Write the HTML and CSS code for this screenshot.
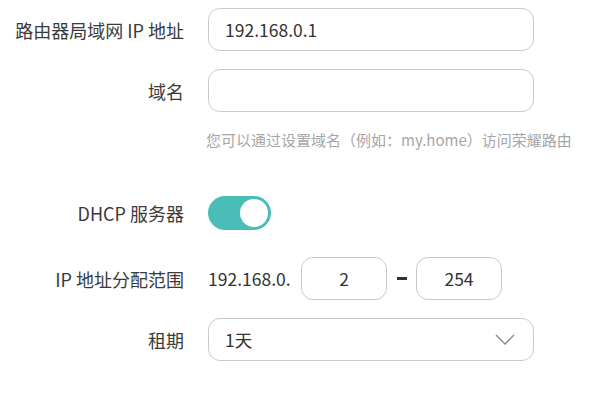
FILE: index.html
```html
<!DOCTYPE html>
<html lang="zh-CN">
<head>
    <meta charset="UTF-8">
    <meta name="viewport" content="width=device-width, initial-scale=1.0">
    <title>局域网设置</title>
    <link rel="stylesheet" href="styles.css">
</head>
<body>

<div class="form">
    <div class="row">
        <label class="row-label" for="lanIp">路由器局域网 IP 地址</label>
        <div class="field">
            <input type="text" id="lanIp" class="text-input" value="192.168.0.1">
        </div>
    </div>

    <div class="row">
        <label class="row-label" for="domain">域名</label>
        <div class="field">
            <input type="text" id="domain" class="text-input" value="">
        </div>
    </div>
    <div class="hint">您可以通过设置域名（例如：my.home）访问荣耀路由</div>

    <div class="row row-switch">
        <span class="row-label">DHCP 服务器</span>
        <div class="field">
            <span class="switch on"><span class="knob"></span></span>
        </div>
    </div>

    <div class="row row-range">
        <span class="row-label">IP 地址分配范围</span>
        <div class="field range">
            <span class="prefix">192.168.0.</span>
            <input type="text" class="text-input small" value="2">
            <span class="dash"></span>
            <input type="text" class="text-input small" value="254">
        </div>
    </div>

    <div class="row">
        <span class="row-label">租期</span>
        <div class="field">
            <div class="select">
                <span>1天</span>
                <svg class="chevron" width="20" height="11" viewBox="0 0 20 11">
                    <polyline points="1,1 10,10 19,1" fill="none" stroke="#8a8a8a" stroke-width="1.4"/>
                </svg>
            </div>
        </div>
    </div>
</div>

</body>
</html>
```

FILE: styles.css
```css
body {
    margin: 0;
    padding: 0;
    background-color: #ffffff;
    font-family: "Noto Sans CJK SC", "Noto Sans", sans-serif;
    color: #333333;
}
.form {
    padding-top: 8px;
}
.row {
    display: flex;
    align-items: center;
    margin-bottom: 18px;
}
.row-label {
    width: 184px;
    flex: none;
    text-align: right;
    font-size: 18px;
    color: #3a3a3a;
    padding-right: 24px;
    box-sizing: content-box;
    white-space: nowrap;
}
.field {
    display: flex;
    align-items: center;
}
.text-input {
    width: 326px;
    height: 43px;
    padding: 0 16px;
    border: 1px solid #c9c9c9;
    border-radius: 12px;
    font-family: inherit;
    font-size: 17.5px;
    color: #333333;
    box-sizing: border-box;
    outline: none;
    background: #ffffff;
}
.hint {
    margin: 0 0 0 206px;
    font-size: 15px;
    color: #a6a6a6;
    line-height: 20px;
}
.row-switch {
    margin-top: 46px;
    margin-bottom: 27px;
}
.switch {
    display: block;
    width: 63px;
    height: 34px;
    border-radius: 17px;
    background-color: #cccccc;
    position: relative;
}
.switch.on {
    background-color: #4bbdb7;
}
.knob {
    position: absolute;
    top: 3px;
    right: 3px;
    width: 28px;
    height: 28px;
    border-radius: 50%;
    background-color: #ffffff;
}
.prefix {
    font-size: 17.5px;
    margin-right: 10px;
    width: 83px;
    white-space: nowrap;
}
.text-input.small {
    width: 86px;
    text-align: center;
    padding: 0 6px;
}
.dash {
    display: block;
    width: 10px;
    height: 3px;
    background-color: #333333;
    margin: 0 9px 0 10px;
}
.select {
    width: 326px;
    height: 43px;
    padding: 0 18px 0 16px;
    border: 1px solid #c9c9c9;
    border-radius: 12px;
    box-sizing: border-box;
    display: flex;
    align-items: center;
    justify-content: space-between;
    font-size: 17.5px;
    color: #333333;
}
```
